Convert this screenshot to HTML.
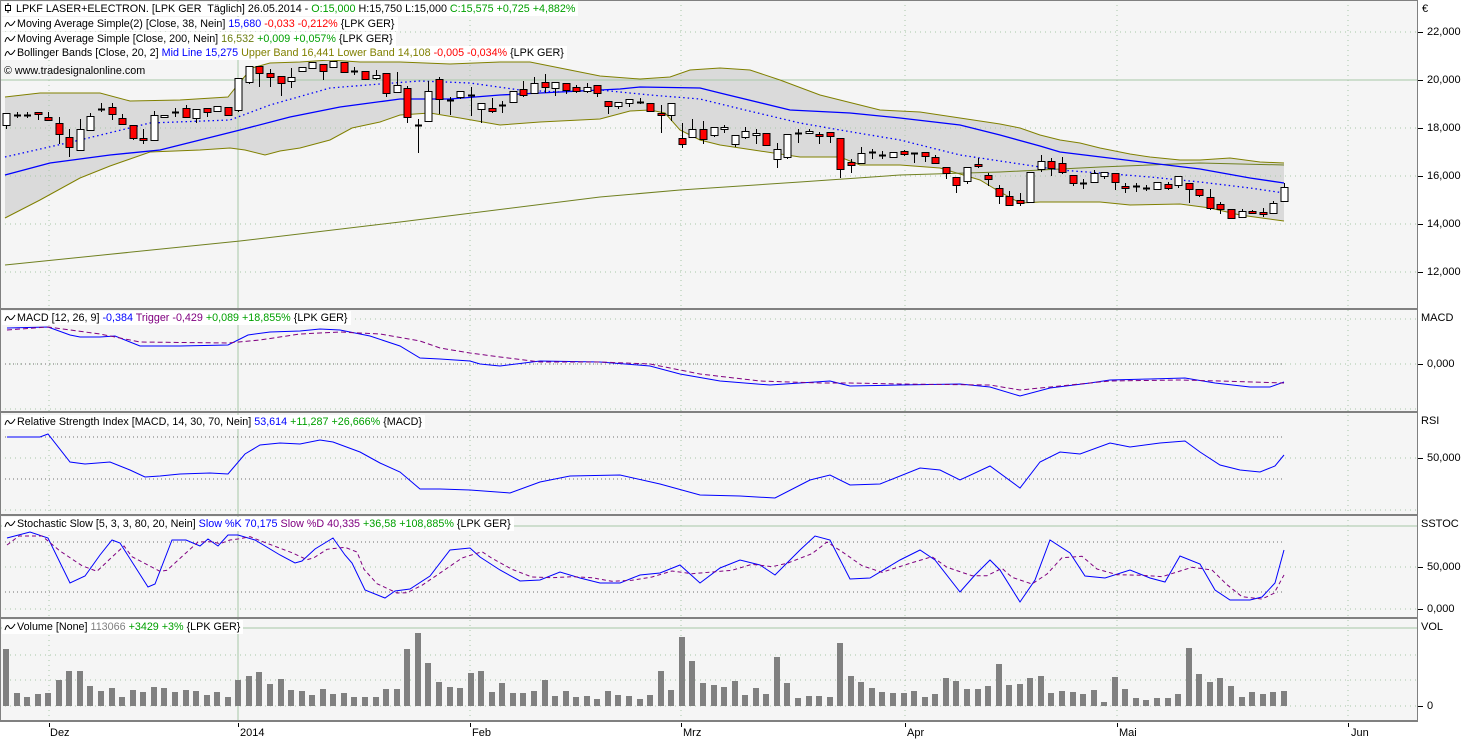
<!DOCTYPE html>
<html><head><meta charset="utf-8"><style>
html,body{margin:0;padding:0;background:#fff;}
body{width:1476px;height:740px;position:relative;overflow:hidden;font-family:"Liberation Sans",sans-serif;font-size:11px;color:#000;}
.lb{position:absolute;left:2px;white-space:nowrap;background:#fff;padding:0 3px 0 2px;line-height:14px;height:14px;font-size:10.75px;}
.lb svg{vertical-align:-2px;margin-right:1px}
.g{color:#00a000}.b{color:#0000ff}.r{color:#ff0000}.o{color:#808000}.p{color:#800080}.gr{color:#808080}.ol{color:#6b7d10}
.ax{position:absolute;white-space:nowrap;line-height:12px;}
</style></head><body>
<svg id="c" width="1476" height="740" style="position:absolute;left:0;top:0" xmlns="http://www.w3.org/2000/svg"></svg>

<div class="lb" style="top:2px"><svg width="8" height="12"><line x1="4" y1="1" x2="4" y2="11" stroke="#000"/><rect x="1.5" y="3.5" width="5" height="5" fill="#fff" stroke="#000"/></svg> LPKF LASER+ELECTRON. [LPK GER&nbsp; Täglich] 26.05.2014 - <span class="g">O:15,000</span> H:15,750 L:15,000 <span class="g">C:15,575 +0,725 +4,882%</span></div>
<div class="lb" style="top:17px"><svg width="12" height="10"><path d="M1 8 Q3 1 5 5 Q7 9 11 2" fill="none" stroke="#000"/></svg>Moving Average Simple(2) [Close, 38, Nein] <span class="b">15,680</span> <span class="r">-0,033 -0,212%</span> {LPK GER}</div>
<div class="lb" style="top:32px"><svg width="12" height="10"><path d="M1 8 Q3 1 5 5 Q7 9 11 2" fill="none" stroke="#000"/></svg>Moving Average Simple [Close, 200, Nein] <span class="ol">16,532</span> <span class="g">+0,009 +0,057%</span> {LPK GER}</div>
<div class="lb" style="top:46px"><svg width="12" height="10"><path d="M1 8 Q3 1 5 5 Q7 9 11 2" fill="none" stroke="#000"/></svg>Bollinger Bands [Close, 20, 2] <span class="b">Mid Line 15,275</span> <span class="o">Upper Band 16,441 Lower Band 14,108</span> <span class="r">-0,005 -0,034%</span> {LPK GER}</div>
<div class="lb" style="top:64px;background:transparent">© www.tradesignalonline.com</div>

<div class="lb" style="top:311px"><svg width="12" height="10"><path d="M1 8 Q3 1 5 5 Q7 9 11 2" fill="none" stroke="#000"/></svg>MACD [12, 26, 9] <span class="b">-0,384</span> <span class="p">Trigger -0,429</span> <span class="g">+0,089 +18,855%</span> {LPK GER}</div>
<div class="lb" style="top:415px"><svg width="12" height="10"><path d="M1 8 Q3 1 5 5 Q7 9 11 2" fill="none" stroke="#000"/></svg>Relative Strength Index [MACD, 14, 30, 70, Nein] <span class="b">53,614</span> <span class="g">+11,287 +26,666%</span> {MACD}</div>
<div class="lb" style="top:517px"><svg width="12" height="10"><path d="M1 8 Q3 1 5 5 Q7 9 11 2" fill="none" stroke="#000"/></svg>Stochastic Slow [5, 3, 3, 80, 20, Nein] <span class="b">Slow %K 70,175</span> <span class="p">Slow %D 40,335</span> <span class="g">+36,58 +108,885%</span> {LPK GER}</div>
<div class="lb" style="top:620px"><svg width="12" height="10"><path d="M1 8 Q3 1 5 5 Q7 9 11 2" fill="none" stroke="#000"/></svg>Volume [None] <span class="gr">113066</span> <span class="g">+3429 +3%</span> {LPK GER}</div>

<div class="ax" style="left:1422px;top:3px">€</div>
<div class="ax" style="left:1427px;top:26px">22,000</div>
<div class="ax" style="left:1427px;top:74px">20,000</div>
<div class="ax" style="left:1427px;top:122px">18,000</div>
<div class="ax" style="left:1427px;top:170px">16,000</div>
<div class="ax" style="left:1427px;top:218px">14,000</div>
<div class="ax" style="left:1427px;top:266px">12,000</div>
<div class="ax" style="left:1421px;top:312px">MACD</div>
<div class="ax" style="left:1427px;top:358px">0,000</div>
<div class="ax" style="left:1421px;top:415px">RSI</div>
<div class="ax" style="left:1427px;top:452px">50,000</div>
<div class="ax" style="left:1421px;top:518px">SSTOC</div>
<div class="ax" style="left:1427px;top:561px">50,000</div>
<div class="ax" style="left:1427px;top:603px">0,000</div>
<div class="ax" style="left:1421px;top:621px">VOL</div>
<div class="ax" style="left:1427px;top:700px">0</div>

<div class="ax" style="left:50px;top:727px">Dez</div>
<div class="ax" style="left:240px;top:727px">2014</div>
<div class="ax" style="left:472px;top:727px">Feb</div>
<div class="ax" style="left:683px;top:727px">Mrz</div>
<div class="ax" style="left:907px;top:727px">Apr</div>
<div class="ax" style="left:1119px;top:727px">Mai</div>
<div class="ax" style="left:1351px;top:727px">Jun</div>

<script>
var s='';
function L(x1,y1,x2,y2,c,ex){s+='<line x1="'+x1+'" y1="'+y1+'" x2="'+x2+'" y2="'+y2+'" stroke="'+c+'" '+(ex||'')+'/>';}
function P(pts,c,ex){s+='<polyline fill="none" points="'+pts+'" stroke="'+c+'" '+(ex||'')+'/>';}
var GD='stroke-dasharray="1 4"';
s+='<rect x="0" y="0" width="1417" height="721" fill="#f5f5f5"/>';
var up="5,97 40,93 100,93 130,101 180,100 228,97 240,82 252,68 270,63 300,62 330,60 360,62 400,62 450,64 500,62 530,62 560,68 600,76 640,79 670,77 690,70 720,68 750,70 780,80 820,95 860,105 880,110 920,112 960,118 1000,124 1020,128 1040,135 1060,140 1080,143 1100,148 1130,154 1150,157 1180,160 1200,160 1230,158 1260,162 1284,163";
var lo="5,218 40,200 80,178 110,166 150,152 200,150 230,148 245,150 265,155 280,151 300,148 330,140 352,128 380,122 400,115 430,113 460,118 500,125 540,122 600,119 630,111 650,110 665,113 680,130 700,140 720,145 760,151 800,157 840,157 860,165 900,165 940,168 980,180 1000,192 1020,203 1040,202 1100,202 1130,205 1180,204 1210,208 1240,215 1284,221";
s+='<polygon points="'+up+' '+lo.split(' ').reverse().join(' ')+'" fill="#dadada"/>';
var GC='#a8c8a8';
[32,128,176,224,272,319,409,510,609,655,680,706].forEach(function(y){L(0,y,1417,y,GC,GD);});
[364,458,567].forEach(function(y){L(0,y,1417,y,GC,GD);});
[49,470,681,905,1117,1348].forEach(function(x){L(x,0,x,721,GC,GD);});
L(0,80,1417,80,GC);L(0,526,1417,526,GC);L(0,628,1417,628,GC);
L(238,0,238,721,GC);
[364,437,479,542,592].forEach(function(y){L(5,y,1284,y,'#707070','stroke-dasharray="1 3"');});
P(up,'#808000');P(lo,'#808000');
P("5,265 240,241 400,222 600,197 680,190 800,182 900,175 1000,172 1100,167 1200,163 1284,165",'#708020');
P("5,175 50,163 110,155 160,150 240,130 290,117 340,107 400,99 450,99 500,95 560,92 620,89 640,87 700,88 720,93 790,110 850,113 900,118 960,125 1000,135 1040,146 1060,152 1150,163 1200,169 1250,178 1284,183",'#0000ff','stroke-width="1.3"');
P("5,157 80,140 150,123 230,120 270,105 330,88 380,84 420,81 470,83 520,90 560,92 600,90 650,95 700,99 745,110 800,123 840,130 900,140 960,155 1000,161 1060,170 1100,173 1150,177 1200,182 1250,188 1284,193",'#0000ff','stroke-dasharray="1.5 3" stroke-width="1.3"');
var C=[["w",113,125,113,129],["x",115,115,112,118],["x",115,115,112,118],["r",112,114,112,120],["r",117,120,112,120],["r",123,134,117,144],["r",137,147,129,157],["w",129,150,119,150],["w",116,130,113,130],["x",109,109,103,112],["r",107,114,103,120],["r",118,124,114,124],["r",125,138,125,140],["r",138,140,129,144],["w",115,140,111,140],["w",115,117,115,117],["x",112,112,108,117],["r",108,117,105,117],["w",109,118,109,123],["r",108,112,108,117],["w",106,111,106,111],["r",107,115,107,115],["w",78,110,78,112],["w",66,82,66,84],["r",66,73,66,87],["r",73,77,69,87],["r",76,83,76,96],["w",77,81,68,88],["w",67,71,67,71],["w",62,68,62,68],["r",64,71,64,80],["w",61,67,61,67],["r",62,72,62,72],["x",71,71,67,75],["r",71,79,71,79],["w",75,78,70,80],["r",73,93,73,97],["w",85,92,72,92],["r",88,117,86,123],["x",125,125,119,153],["w",91,121,81,122],["r",79,99,77,114],["x",100,100,97,115],["w",91,97,91,99],["x",95,95,87,116],["w",103,109,103,123],["r",108,111,98,113],["x",105,105,101,113],["w",91,102,91,102],["r",89,95,81,97],["w",83,93,77,93],["r",82,87,74,93],["w",82,88,82,96],["r",83,90,83,94],["r",87,91,85,93],["w",87,91,83,93],["r",85,93,85,97],["r",101,106,101,114],["w",102,106,102,109],["w",99,103,99,107],["x",102,102,98,104],["r",103,111,103,111],["r",113,115,105,133],["w",103,115,103,121],["r",138,144,123,148],["w",129,137,119,137],["r",129,139,121,144],["w",127,135,127,137],["w",127,129,125,133],["w",135,144,135,147],["w",131,137,127,139],["w",133,135,129,144],["r",133,145,133,145],["w",149,159,143,168],["w",134,157,134,159],["x",133,133,129,143],["w",131,133,129,134],["r",134,136,132,144],["r",132,136,132,143],["r",138,169,138,178],["r",162,165,159,173],["w",153,163,147,163],["x",152,152,149,159],["x",155,155,151,159],["w",152,157,152,157],["r",151,154,150,156],["x",153,153,153,163],["r",152,156,152,162],["r",157,163,155,163],["r",167,173,167,179],["r",177,185,177,193],["w",167,181,167,184],["r",164,166,158,168],["r",175,179,173,186],["r",188,196,185,204],["r",196,205,191,205],["r",200,203,193,206],["w",172,202,172,202],["w",161,169,155,172],["r",161,168,158,176],["r",163,172,157,174],["r",175,183,175,186],["x",183,183,179,189],["w",173,182,170,183],["w",172,176,172,179],["r",173,182,173,190],["r",186,188,183,193],["x",186,186,183,192],["x",188,188,185,191],["w",182,189,182,189],["r",184,188,182,190],["w",176,185,176,188],["r",183,189,183,203],["r",189,195,189,197],["r",197,208,189,210],["r",204,209,202,214],["r",209,218,209,218],["w",211,217,209,218],["r",211,213,210,214],["r",212,214,208,217],["w",203,213,201,213],["w",187,201,183,201]];
function X(i){return Math.round(6+i*10.56);}
s+='<g shape-rendering="crispEdges">';
C.forEach(function(c,i){var x=X(i);
 L(x+0.5,c[3],x+0.5,c[4],'#000');
 if(c[0]=='x'){L(x-3,c[1]+0.5,x+4,c[1]+0.5,'#000','stroke-width="2"');}
 else{var h=Math.max(c[2]-c[1],2);s+='<rect x="'+(x-3)+'" y="'+(c[1]+0.5)+'" width="7" height="'+h+'" fill="'+(c[0]=='w'?'#fff':'#ff0000')+'" stroke="#000" stroke-width="1.3"/>';}
});
var V=[649,693,697,694,693,680,671,671,686,691,688,697,690,692,687,688,692,690,691,695,692,697,680,676,672,684,679,690,691,695,689,694,693,697,697,697,689,689,649,633,663,682,687,688,673,671,692,683,693,693,691,680,696,691,697,696,699,691,695,696,699,695,671,690,637,661,683,685,687,681,695,688,694,657,683,698,696,696,697,643,676,682,688,692,693,693,691,697,694,678,681,689,689,686,664,685,684,678,676,693,691,692,694,690,702,677,689,698,700,698,698,694,648,674,682,678,686,697,692,694,692,691];
V.forEach(function(t,i){var x=X(i);s+='<rect x="'+(x-3)+'" y="'+t+'" width="6" height="'+(706-t)+'" fill="#808080"/>';});
s+='</g>';
P("7,328 48,327 70,335 80,337 100,337 115,336 140,346 180,346 228,345 248,335 270,332 300,331 320,329 340,330 370,336 400,346 420,358 440,359 470,361 480,364 500,366 540,361 600,362 650,366 680,374 720,381 770,385 800,383 830,381 850,386 900,385 960,384 990,387 1020,396 1050,388 1090,383 1110,380 1150,379 1185,378 1215,383 1250,387 1270,387 1284,382",'#0000ff');
P("7,330 48,327 100,334 140,342 228,343 260,340 300,334 340,332 380,334 420,341 440,348 470,353 500,357 540,362 600,362 650,364 700,374 760,381 820,383 850,383 900,384 990,385 1020,390 1060,386 1110,381 1180,380 1220,381 1284,383",'#800080','stroke-dasharray="5 3"');
P("7,437 40,437 48,434 70,462 85,464 110,462 130,470 145,477 160,476 180,474 210,473 228,474 245,454 260,445 280,443 300,444 320,440 333,442 360,452 380,463 400,472 420,489 440,489 470,490 510,493 540,482 570,476 620,475 660,484 700,495 740,496 775,498 810,480 830,475 850,485 880,484 920,468 940,470 960,480 990,466 1020,488 1040,462 1060,452 1080,454 1110,443 1130,447 1160,443 1185,441 1200,452 1220,465 1240,470 1260,472 1275,466 1284,455",'#0000ff');
var K=[[7,538],[30,532],[48,538],[70,583],[85,576],[100,555],[112,540],[120,543],[148,587],[155,584],[172,540],[186,540],[200,546],[208,539],[218,546],[228,535],[238,535],[255,540],[280,555],[295,563],[302,561],[315,549],[333,538],[345,555],[352,563],[365,590],[385,598],[395,591],[410,589],[430,576],[450,550],[470,548],[480,557],[500,570],[520,581],[540,580],[560,572],[580,578],[600,583],[620,583],[640,575],[660,573],[680,565],[700,583],[720,568],[740,560],[760,565],[775,575],[800,550],[815,536],[830,540],[850,579],[870,578],[900,560],[920,550],[935,560],[960,592],[975,575],[990,560],[1000,570],[1020,602],[1035,580],[1050,540],[1070,553],[1085,576],[1105,578],[1130,570],[1150,578],[1165,582],[1180,556],[1200,564],[1215,590],[1230,600],[1250,600],[1262,597],[1275,583],[1284,550]];
P(K.map(function(p){return p.join(',');}).join(' '),'#0000ff');
var D=[];for(var j=0;j<K.length-1;j++){var a=K[Math.max(0,j-1)][1],b=K[j][1],c2=K[Math.min(K.length-1,j+1)][1];var x=K[j][0]+12;if(x>1284)break;D.push([x,(a+b+c2)/3]);}
D.unshift([7,545]);D.push([1284,575]);
P(D.map(function(p){return p[0]+','+p[1].toFixed(1);}).join(' '),'#800080','stroke-dasharray="4 3"');
s+='<g shape-rendering="crispEdges">';
[309,412,515,618].forEach(function(y){s+='<rect x="0" y="'+(y-1)+'" width="1418" height="2" fill="#808080"/>';});
s+='<rect x="0.5" y="0.5" width="1417" height="720" fill="none" stroke="#808080"/>';
s+='<rect x="0" y="720" width="1418" height="2" fill="#808080"/>';
[32,80,128,176,224,272,364,458,567,609,706].forEach(function(y){L(1418,y+0.5,1423,y+0.5,'#000');});
[49,238,470,681,905,1117,1348].forEach(function(x){L(x+0.5,723,x+0.5,727,'#000');});
s+='</g>';
document.getElementById('c').innerHTML=s;
</script>
</body></html>
